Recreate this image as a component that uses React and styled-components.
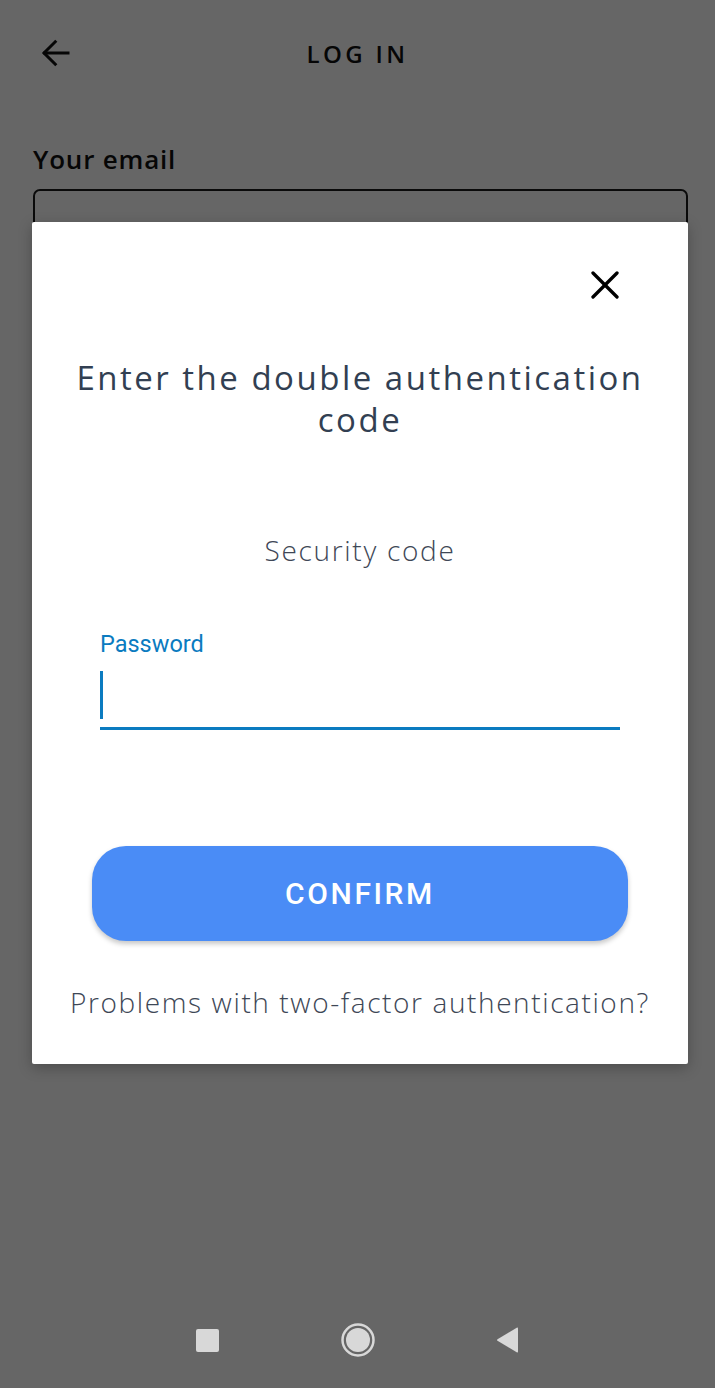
import React from "react";
import styled, { createGlobalStyle } from "styled-components";

const Global = createGlobalStyle`
  html, body { margin: 0; padding: 0; }
  body { width: 715px; height: 1388px; overflow: hidden; background: #666; }
  * { box-sizing: border-box; }
`;

const Phone = styled.div`
  width: 715px;
  height: 1388px;
  display: flex;
  flex-direction: column;
  background: #666;
`;

const Screen = styled.div`
  position: relative;
  flex: 1;
  background: #fff;
  overflow: hidden;
`;

const Header = styled.header`
  height: 106px;
  display: grid;
  grid-template-columns: 106px 1fr 106px;
  align-items: center;
`;

const BackButton = styled.button`
  border: 0;
  background: none;
  padding: 0 0 0 38px;
  height: 106px;
  display: flex;
  align-items: center;
  color: #111;
  cursor: pointer;
`;

const Title = styled.h1`
  margin: 0;
  text-align: center;
  font-family: "Open Sans", sans-serif;
  font-weight: 600;
  font-size: 24px;
  letter-spacing: 3.4px;
  color: #111;
`;

const Form = styled.div`
  padding: 35px 27px 0 33px;
  display: flex;
  flex-direction: column;
  gap: 12px;
`;

const FieldLabel = styled.label`
  font-family: "Open Sans", sans-serif;
  font-weight: 600;
  font-size: 26px;
  letter-spacing: 0.8px;
  color: #111;
`;

const OutlinedInput = styled.div`
  height: 64px;
  border: 2px solid #1a1a1a;
  border-radius: 7px;
`;

const Dim = styled.div`
  position: absolute;
  inset: 0;
  background: rgba(0, 0, 0, 0.6);
`;

const Modal = styled.div`
  position: absolute;
  top: 222px;
  left: 32px;
  width: 656px;
  height: 842px;
  background: #fff;
  border-radius: 2px;
  box-shadow: 0 4px 14px rgba(0, 0, 0, 0.25);
  display: flex;
  flex-direction: column;
  align-items: stretch;
`;

const CloseRow = styled.div`
  display: flex;
  justify-content: flex-end;
  padding: 47px 67px 0 0;
`;

const CloseButton = styled.button`
  border: 0;
  background: none;
  padding: 0;
  width: 32px;
  height: 32px;
  display: flex;
  align-items: center;
  justify-content: center;
  cursor: pointer;
`;

const ModalTitle = styled.h2`
  margin: 56px 0 0;
  padding: 0 30px;
  text-align: center;
  font-family: "Open Sans", sans-serif;
  font-weight: 500;
  font-size: 33px;
  line-height: 42px;
  letter-spacing: 2.5px;
  color: #323f52;
`;

const Subtitle = styled.p`
  margin: 91px 0 0;
  text-align: center;
  font-family: "Open Sans", sans-serif;
  font-weight: 300;
  font-size: 28px;
  line-height: 36px;
  letter-spacing: 1.7px;
  color: #3e4756;
`;

const InputField = styled.div`
  margin: 63px 68px 0;
  display: flex;
  flex-direction: column;
`;

const FloatLabel = styled.span`
  font-family: Roboto, sans-serif;
  font-size: 23.5px;
  line-height: 26px;
  color: #0b7bc0;
`;

const Underlined = styled.div`
  margin-top: 14px;
  height: 59px;
  border-bottom: 3px solid #0b7bc0;
  display: flex;
  align-items: flex-start;
`;

const Caret = styled.span`
  width: 3px;
  height: 48px;
  background: #0b7bc0;
`;

const ConfirmButton = styled.button`
  margin: 116px 60px 0;
  height: 95px;
  border: 0;
  border-radius: 34px;
  background: #4a8cf6;
  color: #fff;
  font-family: Roboto, sans-serif;
  font-weight: 500;
  font-size: 30px;
  letter-spacing: 2.6px;
  box-shadow: 0 3px 5px rgba(0, 0, 0, 0.22);
  cursor: pointer;
`;

const HelpLink = styled.a`
  margin-top: 43px;
  text-align: center;
  font-family: "Open Sans", sans-serif;
  font-weight: 300;
  font-size: 28px;
  line-height: 36px;
  letter-spacing: 1.6px;
  color: #3e4756;
  text-decoration: none;
  white-space: nowrap;
`;

const NavBar = styled.nav`
  height: 96px;
  background: #666;
  display: flex;
  align-items: center;
  justify-content: center;
`;

const NavSlot = styled.div`
  width: 150px;
  display: flex;
  justify-content: center;
  align-items: center;
`;

const NavSquare = styled.span`
  width: 23px;
  height: 23px;
  border-radius: 2px;
  background: #d8d8d8;
`;

export default function App() {
  return (
    <Phone>
      <Global />
      <Screen>
        <Header>
          <BackButton aria-label="Back">
            <svg width="36" height="36" viewBox="0 0 24 24" fill="none" stroke="#111" strokeWidth="2" strokeLinecap="square">
              <path d="M20 12H4.5" />
              <path d="M11.5 4.5L4 12l7.5 7.5" />
            </svg>
          </BackButton>
          <Title>LOG IN</Title>
          <span />
        </Header>
        <Form>
          <FieldLabel>Your email</FieldLabel>
          <OutlinedInput />
        </Form>
        <Dim />
        <Modal role="dialog">
          <CloseRow>
            <CloseButton aria-label="Close">
              <svg width="28" height="28" viewBox="0 0 28 28" fill="none" stroke="#000" strokeWidth="3.3" strokeLinecap="round">
                <path d="M2 2L26 26" />
                <path d="M26 2L2 26" />
              </svg>
            </CloseButton>
          </CloseRow>
          <ModalTitle>Enter the double authentication code</ModalTitle>
          <Subtitle>Security code</Subtitle>
          <InputField>
            <FloatLabel>Password</FloatLabel>
            <Underlined>
              <Caret />
            </Underlined>
          </InputField>
          <ConfirmButton>CONFIRM</ConfirmButton>
          <HelpLink href="#">Problems with two-factor authentication?</HelpLink>
        </Modal>
      </Screen>
      <NavBar>
        <NavSlot>
          <NavSquare />
        </NavSlot>
        <NavSlot>
          <svg width="36" height="36" viewBox="0 0 36 36">
            <circle cx="18" cy="18" r="15.5" fill="none" stroke="#d8d8d8" strokeWidth="2.5" />
            <circle cx="18" cy="18" r="12" fill="#d8d8d8" />
          </svg>
        </NavSlot>
        <NavSlot>
          <svg width="26" height="28" viewBox="0 0 26 28">
            <path d="M23 2.5 L23 25.5 Q23 27 21.7 26.3 L2.5 14.8 Q1.5 14 2.5 13.2 L21.7 1.7 Q23 1 23 2.5Z" fill="#d8d8d8" />
          </svg>
        </NavSlot>
      </NavBar>
    </Phone>
  );
}
